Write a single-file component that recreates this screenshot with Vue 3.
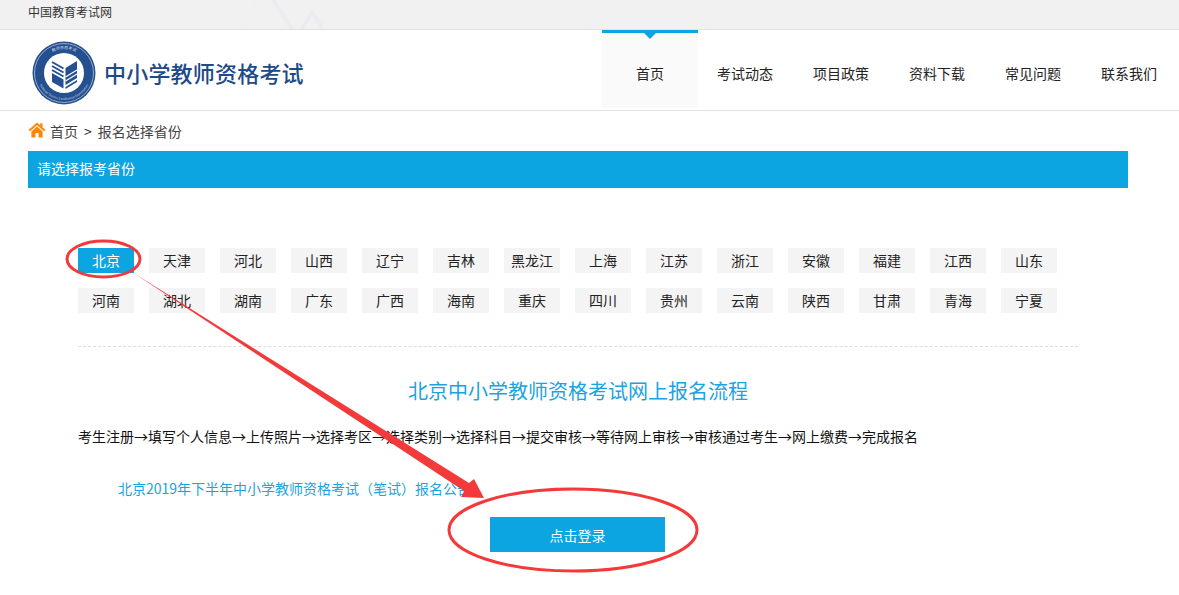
<template>
  <div class="page">
    <div class="topbar">
      <span>中国教育考试网</span>
      <svg class="peaks" width="120" height="29" viewBox="0 0 120 29">
        <path d="M15 29 L32 0" fill="none" stroke="#eef0f4" stroke-width="2" />
        <path d="M48 0 L67 29" fill="none" stroke="#eaecf2" stroke-width="4" />
        <path d="M77 29 L87 12 L98 29" fill="none" stroke="#eaecf2" stroke-width="3.5" stroke-linejoin="round" />
      </svg>
    </div>

    <header class="header">
      <div class="brand">
        <svg class="seal" width="64" height="64" viewBox="0 0 64 64">
          <circle cx="32" cy="32" r="31.5" fill="#24508f" />
          <circle cx="32" cy="32" r="29.5" fill="none" stroke="#dfe6f0" stroke-width="0.6" />
          <circle cx="32" cy="32" r="20" fill="#fff" />
          <defs>
            <path id="sealTop" d="M8 32 A24 24 0 0 1 56 32" />
            <path id="sealBottom" d="M5 32 A27 27 0 0 0 59 32" />
          </defs>
          <text class="seal-text"><textPath href="#sealTop" startOffset="50%" text-anchor="middle">教师资格考试</textPath></text>
          <text class="seal-text small"><textPath href="#sealBottom" startOffset="50%" text-anchor="middle">National Teacher Certification Examination</textPath></text>
          <path d="M33.5 27 L45 20 V37 L33.5 44 Z" fill="#24508f" />
          <path d="M33.5 46 L45 39 V41 L33.5 48 Z" fill="#24508f" />
          <path d="M20 32 L31.5 38.5 V47.5 L20 41 Z" fill="#24508f" />
          <path d="M20 21 L31.5 27.5 M20 25 L31.5 31.5 M20 29 L31.5 35.5" stroke="#24508f" stroke-width="2" fill="none" />
          <path d="M33.5 40 L45 33 M33.5 36 L45 29" stroke="#fff" stroke-width="1.2" fill="none" />
        </svg>
        <span class="brand-name">中小学教师资格考试</span>
      </div>
      <nav class="nav">
        <a
          v-for="(item, i) in navItems"
          :key="item"
          class="nav-item"
          :class="{ active: i === 0 }"
        >{{ item }}</a>
      </nav>
    </header>

    <main class="content">
      <div class="crumbs">
        <svg width="18" height="16" viewBox="0 0 18 16">
          <path d="M9 0.5 L0.5 8 L2 9.3 L9 3.2 L16 9.3 L17.5 8 L14.5 5.3 V1.2 H12.2 V3.3 Z" fill="#fa8705" />
          <path d="M3.4 9.4 L9 4.6 L14.6 9.4 V15.5 H10.5 V11 H7.5 V15.5 H3.4 Z" fill="#fa8705" />
        </svg>
        <span>首页</span>
        <span class="sep">&gt;</span>
        <span>报名选择省份</span>
      </div>

      <div class="section-title">请选择报考省份</div>

      <div class="body">
        <div class="provinces">
          <a
            v-for="(name, i) in provinces"
            :key="name"
            class="province"
            :class="{ active: i === 0 }"
          >{{ name }}</a>
        </div>

        <h2 class="flow-title">北京中小学教师资格考试网上报名流程</h2>
        <p class="flow">考生注册→填写个人信息→上传照片→选择考区→选择类别→选择科目→提交审核→等待网上审核→审核通过考生→网上缴费→完成报名</p>
        <a class="notice">北京2019年下半年中小学教师资格考试（笔试）报名公告</a>
        <button class="login">点击登录</button>
      </div>
    </main>

    <!-- red marks drawn on top of the screenshot -->
    <svg class="marks" width="1179" height="595" viewBox="0 0 1179 595">
      <ellipse cx="103.5" cy="259" rx="36.5" ry="18" fill="none" stroke="#f33a3a" stroke-width="3" />
      <ellipse cx="573" cy="530" rx="124" ry="41" fill="none" stroke="#f33a3a" stroke-width="3" />
      <path d="M132 272 L469 483 L474 479 L484 498 L461 497 L464 491 Z" fill="#f33a3a" />
    </svg>
  </div>
</template>

<script setup>
const navItems = ["首页", "考试动态", "项目政策", "资料下载", "常见问题", "联系我们"];

const provinces = [
  "北京", "天津", "河北", "山西", "辽宁", "吉林", "黑龙江",
  "上海", "江苏", "浙江", "安徽", "福建", "江西", "山东",
  "河南", "湖北", "湖南", "广东", "广西", "海南", "重庆",
  "四川", "贵州", "云南", "陕西", "甘肃", "青海", "宁夏",
];
</script>

<style scoped>
.page {
  position: relative;
  width: 1179px;
  height: 595px;
  overflow: hidden;
  background: #fff;
  color: #333;
  font-family: "Noto Sans CJK SC", "Liberation Sans", sans-serif;
  font-size: 14px;
  text-spacing-trim: space-all;
}

.topbar {
  position: relative;
  height: 29px;
  padding-left: 28px;
  background: #f1f1f1;
  border-bottom: 1px solid #e0e0e0;
  font-size: 12px;
  line-height: 24px;
}

.peaks {
  position: absolute;
  left: 225px;
  top: 0;
}

.header {
  display: flex;
  justify-content: space-between;
  height: 80px;
  border-bottom: 1px solid #e2e2e2;
}

.brand {
  display: flex;
  align-items: center;
  gap: 8px;
  padding-left: 32px;
  padding-top: 5px;
}

.brand-name {
  font-size: 22px;
  font-weight: 500;
  letter-spacing: 0.2px;
  color: #1d4a88;
  margin-top: -1px;
}

.seal-text {
  font-size: 4px;
  fill: #cfdaea;
}

.seal-text.small {
  font-size: 3px;
}

.nav {
  display: flex;
  margin-right: 1px;
}

.nav-item {
  position: relative;
  width: 96px;
  height: 78px;
  padding-right: 2px;
  border-top: 3px solid transparent;
  line-height: 80px;
  text-align: center;
  color: #222;
  box-sizing: border-box;
}

.nav-item.active {
  padding-right: 0;
  border-top-color: #0da4e2;
  background: #fafafa;
}

.nav-item.active::after {
  content: "";
  position: absolute;
  left: 42px;
  top: 0;
  border: 6px solid transparent;
  border-top-color: #0da4e2;
}

.content {
  padding: 0 51px 0 28px;
}

.crumbs {
  display: flex;
  align-items: center;
  gap: 5px;
  height: 40px;
  color: #444;
}

.crumbs svg {
  margin-right: -1px;
  margin-top: -3px;
}

.sep {
  color: #222;
  margin: 0 1px;
}

.section-title {
  height: 37px;
  padding-left: 9px;
  background: #0da4e2;
  color: #fff;
  line-height: 35px;
}

.body {
  padding: 60px 50px 0;
}

.provinces {
  display: grid;
  grid-template-columns: repeat(14, 56px);
  column-gap: 15px;
  row-gap: 15px;
  padding-bottom: 33px;
  border-bottom: 1px dashed #dcdcdc;
}

.province {
  height: 25px;
  line-height: 25px;
  text-align: center;
  background: #f4f4f4;
  color: #222;
}

.province.active {
  background: #0da4e2;
  color: #fff;
}

.flow-title {
  margin: 29px 0 0;
  font-size: 20px;
  font-weight: 400;
  line-height: 30px;
  text-align: center;
  color: #1aa3e0;
}

.flow {
  margin: 18px 0 0;
  line-height: 24px;
  color: #111;
  white-space: nowrap;
}

.notice {
  display: block;
  margin: 28px 0 0 40px;
  font-size: 14px;
  line-height: 24px;
  color: #1aa3e0;
}

.login {
  display: block;
  width: 175px;
  height: 35px;
  margin: 17px 0 0 412px;
  padding: 0;
  border: none;
  background: #0da4e2;
  color: #fff;
  font-family: inherit;
  font-size: 14px;
}

.marks {
  position: absolute;
  left: 0;
  top: 0;
  pointer-events: none;
}
</style>
